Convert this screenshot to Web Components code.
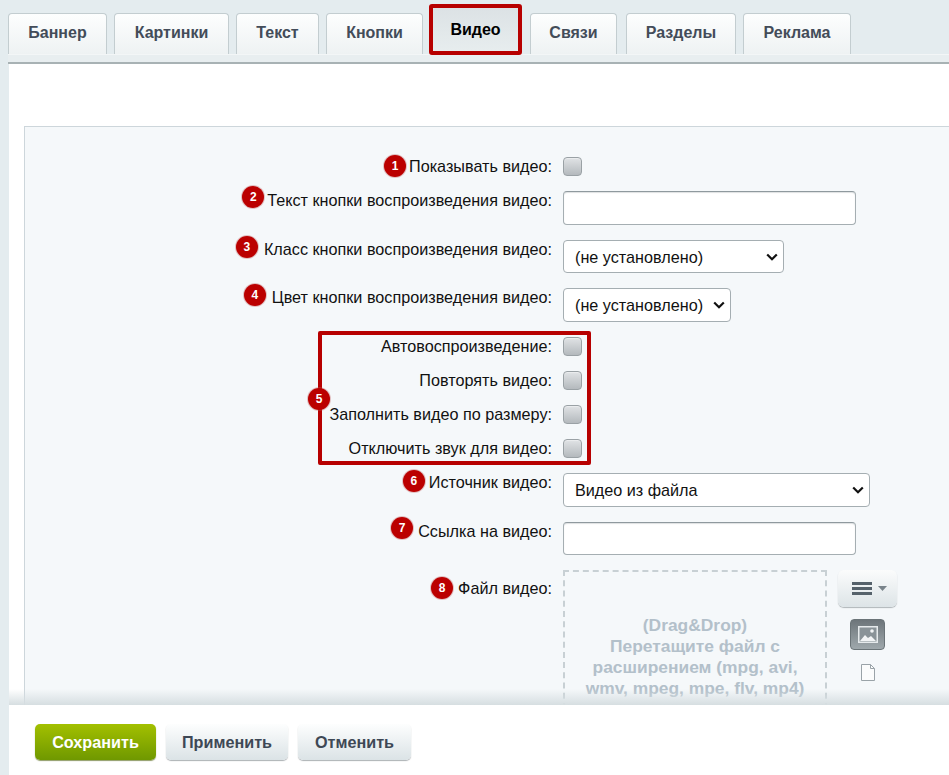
<!DOCTYPE html>
<html lang="ru">
<head>
<meta charset="utf-8">
<title>Видео</title>
<style>
  html, body { margin: 0; padding: 0; background: #e4ecef; }
  body { font-family: "Liberation Sans", Arial, sans-serif; }
</style>
</head>
<body>
<edit-page>
  <tab-bar slot="tabs">
    <tab-item width="99">Баннер</tab-item>
    <tab-item width="115">Картинки</tab-item>
    <tab-item width="83">Текст</tab-item>
    <tab-item width="97">Кнопки</tab-item>
    <tab-item width="93" active>Видео</tab-item>
    <tab-item width="87" style="margin-right:2px">Связи</tab-item>
    <tab-item width="110">Разделы</tab-item>
    <tab-item width="108">Реклама</tab-item>
  </tab-bar>

  <form-row n="1" gap="3"><ui-check></ui-check></form-row>
  <form-row n="2" gap="3" lift="3" label="Текст кнопки воспроизведения видео:"><ui-input></ui-input></form-row>
  <form-row n="3" gap="6" lift="2" label="Класс кнопки воспроизведения видео:"><ui-select width="221" height="33">(не установлено)</ui-select></form-row>
  <form-row n="4" gap="6" lift="2" label="Цвет кнопки воспроизведения видео:"><ui-select width="168">(не установлено)</ui-select></form-row>
  <check-group>
    <form-row label="Автовоспроизведение:"><ui-check></ui-check></form-row>
    <form-row label="Повторять видео:"><ui-check></ui-check></form-row>
    <form-row label="Заполнить видео по размеру:"><ui-check></ui-check></form-row>
    <form-row label="Отключить звук для видео:"><ui-check></ui-check></form-row>
  </check-group>
  <form-row n="6" gap="4" lift="1" label="Источник видео:"><ui-select width="307">Видео из файла</ui-select></form-row>
  <form-row n="7" gap="5" lift="3" label="Ссылка на видео:"><ui-input height="33"></ui-input></form-row>
  <form-row n="8" gap="5" drop label="Файл видео:">
    <file-field>(Drag&amp;Drop)<br>Перетащите файл с расширением (mpg, avi, wmv, mpeg, mpe, flv, mp4)</file-field>
  </form-row>

  <action-button slot="footer" kind="save">Сохранить</action-button>
  <action-button slot="footer">Применить</action-button>
  <action-button slot="footer" width="113">Отменить</action-button>
</edit-page>

<script>
const FONT = `"Liberation Sans", Arial, sans-serif`;

class EditPage extends HTMLElement {
  constructor() {
    super();
    this.attachShadow({ mode: "open" });
    this.shadowRoot.innerHTML = `
      <style>
        :host { display: flex; flex-direction: column; height: 775px; overflow: hidden; font-family: ${FONT}; }
        .strip { height: 7px; margin-left: 8px; background: #e8eef0; border-top: 1px solid #f3f6f7; border-bottom: 2px solid #a8b2b4; flex: none; }
        .panel { flex: 1; min-height: 0; margin-left: 9px; padding: 62px 0 0 15px; background: #fff; position: relative; overflow: hidden; }
        .inner { height: 100%; box-sizing: border-box; padding-top: 30px; background: #f5f8fa; border-top: 1px solid #cdd6db; border-left: 1px solid #cdd6db; }
        .fade { position: absolute; left: 0; right: 0; bottom: 0; height: 16px; background: linear-gradient(rgba(214,222,225,0), #d6dee1); }
        footer { flex: none; height: 70px; box-sizing: border-box; margin-left: 9px; padding: 19px 0 0 26px; background: #fff; display: flex; gap: 10px; align-items: flex-start; }
      </style>
      <slot name="tabs"></slot>
      <div class="strip"></div>
      <div class="panel">
        <div class="inner"><slot></slot></div>
        <div class="fade"></div>
      </div>
      <footer><slot name="footer"></slot></footer>`;
  }
}

class TabBar extends HTMLElement {
  constructor() {
    super();
    this.attachShadow({ mode: "open" });
    this.shadowRoot.innerHTML = `
      <style>
        :host { display: flex; align-items: flex-end; gap: 7px; height: 54px; padding-left: 8px; flex: none; }
      </style>
      <slot></slot>`;
  }
}

class TabItem extends HTMLElement {
  constructor() {
    super();
    this.attachShadow({ mode: "open" });
    this.shadowRoot.innerHTML = `
      <style>
        :host {
          display: flex; align-items: center; justify-content: center; box-sizing: border-box;
          height: 41px; padding-bottom: 3px; font-size: 16px; font-weight: bold; color: #434c59;
          border: 1px solid #c3cdd0; border-bottom: 0; border-radius: 4px 4px 0 0;
          background: linear-gradient(#fdfefe, #eef2f3);
        }
        :host([active]) {
          height: 51px; margin: 0 1px -1px -1px; padding: 0; color: #000; position: relative;
          border: 4px solid #b70000; border-radius: 3px;
          background: linear-gradient(#dce2e5, #e7edee);
        }
      </style>
      <slot></slot>`;
    this.style.width = this.getAttribute("width") + "px";
  }
}

class NumBadge extends HTMLElement {
  constructor() {
    super();
    this.attachShadow({ mode: "open" });
    this.shadowRoot.innerHTML = `
      <style>
        :host {
          display: flex; align-items: center; justify-content: center; flex: none;
          width: 22px; height: 22px; border-radius: 50%; background: #bb0000;
          box-shadow: 0 0 0 1px rgba(190, 90, 90, .35);
          color: #fff; font: bold 12px ${FONT};
        }
      </style>
      <slot></slot>`;
  }
}

class FormRow extends HTMLElement {
  constructor() {
    super();
    this.attachShadow({ mode: "open" });
    const n = this.getAttribute("n");
    const label = this.getAttribute("label") || "Показывать видео:";
    const gap = this.getAttribute("gap") || 0;
    const lift = this.getAttribute("lift") || 0;
    const badge = n
      ? `<num-badge style="margin: -2px ${gap}px -2px 0; transform: translateY(-${lift}px)">${n}</num-badge>`
      : "";
    this.shadowRoot.innerHTML = `
      <style>
        :host { display: grid; grid-template-columns: 527px 1fr; column-gap: 11px; align-items: start; margin-bottom: 15px; }
        .label { display: flex; justify-content: flex-end; align-items: center; height: 18px; font-size: 16.2px; line-height: 18px; color: #111; white-space: nowrap; }
        :host([drop]) .label { margin-top: 9px; }
      </style>
      <div class="label">${badge}<span>${label}</span></div>
      <div><slot></slot></div>`;
  }
}

class CheckGroup extends HTMLElement {
  constructor() {
    super();
    this.attachShadow({ mode: "open" });
    this.shadowRoot.innerHTML = `
      <style>
        :host { display: block; position: relative; }
        .frame { position: absolute; left: 293px; top: -6px; width: 273px; height: 134px; box-sizing: border-box; border: 4px solid #b70000; border-radius: 2px; pointer-events: none; }
        num-badge { position: absolute; left: 283px; top: 51px; }
      </style>
      <slot></slot>
      <div class="frame"></div>
      <num-badge>5</num-badge>`;
  }
}

class UiCheck extends HTMLElement {
  constructor() {
    super();
    this.attachShadow({ mode: "open" });
    this.shadowRoot.innerHTML = `
      <style>
        :host {
          display: block; width: 19px; height: 19px; box-sizing: border-box;
          border: 1px solid #9aa1a5; border-radius: 4px;
          background: linear-gradient(#e0e3e5, #b4b9bd);
          box-shadow: inset 0 1px 1px rgba(255,255,255,.4);
        }
      </style>`;
  }
}

class UiInput extends HTMLElement {
  constructor() {
    super();
    this.attachShadow({ mode: "open" });
    const h = this.getAttribute("height") || 34;
    this.shadowRoot.innerHTML = `
      <style>
        :host { display: block; }
        input {
          display: block; width: 293px; height: ${h}px; box-sizing: border-box; margin: 0; padding: 0 10px;
          background: #fff; border: 1px solid #a5aeb2; border-top-color: #8f999e; border-radius: 4px;
          box-shadow: inset 0 1px 1px rgba(120,130,135,.25); outline: none;
        }
      </style>
      <input type="text">`;
  }
}

class UiSelect extends HTMLElement {
  constructor() {
    super();
    this.attachShadow({ mode: "open" });
    const text = this.textContent.trim();
    const h = this.getAttribute("height") || 34;
    this.shadowRoot.innerHTML = `
      <style>
        :host { display: block; position: relative; width: ${this.getAttribute("width")}px; }
        select {
          display: block; width: 100%; height: ${h}px; box-sizing: border-box; margin: 0; padding: 0 24px 0 11px;
          appearance: none; -webkit-appearance: none;
          font: 16.2px ${FONT}; color: #111; background: #fff;
          border: 1px solid #a5aeb2; border-radius: 4px;
        }
        svg { position: absolute; right: 6px; top: 13px; pointer-events: none; }
      </style>
      <select><option>${text}</option></select>
      <svg width="12" height="8" viewBox="0 0 12 8" fill="none"><path d="M1.2 1.5 6 6.2 10.8 1.5" stroke="#111" stroke-width="2.2"/></svg>`;
  }
}

class FileField extends HTMLElement {
  constructor() {
    super();
    this.attachShadow({ mode: "open" });
    this.shadowRoot.innerHTML = `
      <style>
        :host { display: flex; gap: 11px; align-items: flex-start; }
        .drop {
          width: 264px; height: 180px; box-sizing: border-box; padding: 42.6px 14px 0;
          border: 2px dashed #c8d0d4; text-align: center;
          font-size: 17.4px; font-weight: bold; line-height: 21.3px; color: #b3c0ca;
        }
        .tools { display: flex; flex-direction: column; align-items: center; width: 59px; }
        .menu {
          width: 59px; height: 37px; box-sizing: border-box; padding-left: 4px; display: flex; align-items: center; justify-content: center; gap: 6px;
          border-radius: 6px; background: linear-gradient(#fbfcfc, #dde4e7);
          box-shadow: 0 1px 1px rgba(90,100,105,.45);
        }
        .pic {
          width: 35px; height: 31px; box-sizing: border-box; margin-top: 12px; display: flex; align-items: center; justify-content: center;
          border: 1px solid #6b7478; border-radius: 4px; background: linear-gradient(#6d757a, #9fa8ac);
        }
        .doc { margin-top: 14px; display: block; }
      </style>
      <div class="drop"><slot></slot></div>
      <div class="tools">
        <div class="menu">
          <svg width="20" height="13" viewBox="0 0 20 13"><path d="M0 0h20v3H0zM0 5h20v3H0zM0 10h20v3H0z" fill="#56626b"/></svg>
          <svg width="9" height="5" viewBox="0 0 9 5"><path d="M0 0h9L4.5 5z" fill="#79838a"/></svg>
        </div>
        <div class="pic">
          <svg width="20" height="17" viewBox="0 0 20 17">
            <rect x=".75" y=".75" width="18.5" height="15.5" fill="#8a9398" stroke="#e6eaec" stroke-width="1.5"/>
            <path d="M2 15l5-6 3 3 3-2 5 5z" fill="#f2f4f5"/>
            <circle cx="14" cy="5" r="1.8" fill="#f2f4f5"/>
          </svg>
        </div>
        <svg class="doc" width="14" height="17" viewBox="0 0 14 17" fill="none">
          <path d="M.5.5h9l4 4v12H.5z" fill="#fbfcfc" stroke="#9aa3a8"/>
          <path d="M9.5.5v4h4" stroke="#9aa3a8"/>
        </svg>
      </div>`;
  }
}

class ActionButton extends HTMLElement {
  constructor() {
    super();
    this.attachShadow({ mode: "open" });
    this.shadowRoot.innerHTML = `
      <style>
        :host {
          display: flex; align-items: center; justify-content: center; box-sizing: border-box; height: 36px; width: 122px;
          font-size: 16.2px; font-weight: bold; color: #3e4855; border-radius: 5px;
          background: linear-gradient(#fdfefe, #dbe3e6);
          box-shadow: 0 1px 1px rgba(90,100,105,.5);
        }
        :host([kind="save"]) {
          width: 121px; color: #fff; background: linear-gradient(#a3c000, #6f9800);
          box-shadow: 0 1px 1px rgba(70,90,0,.6);
        }
      </style>
      <slot></slot>`;
    if (this.hasAttribute("width")) this.style.width = this.getAttribute("width") + "px";
  }
}

customElements.define("edit-page", EditPage);
customElements.define("tab-bar", TabBar);
customElements.define("tab-item", TabItem);
customElements.define("num-badge", NumBadge);
customElements.define("form-row", FormRow);
customElements.define("check-group", CheckGroup);
customElements.define("ui-check", UiCheck);
customElements.define("ui-input", UiInput);
customElements.define("ui-select", UiSelect);
customElements.define("file-field", FileField);
customElements.define("action-button", ActionButton);
</script>
</body>
</html>
